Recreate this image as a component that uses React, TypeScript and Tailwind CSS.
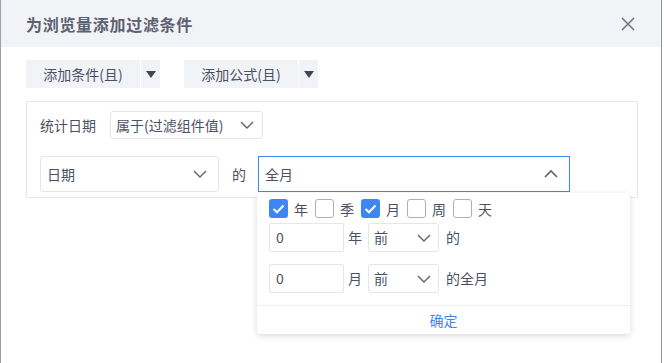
import React from "react";

const font = { fontFamily: '"Noto Sans CJK SC", "Noto Sans", sans-serif' };

function ChevronDown({ className = "" }: { className?: string }) {
  return (
    <svg width="16" height="10" viewBox="0 0 16 10" className={className} fill="none">
      <path d="M2 2 L8 8 L14 2" stroke="#5b6272" strokeWidth="1.4" />
    </svg>
  );
}

function ChevronUp() {
  return (
    <svg width="16" height="10" viewBox="0 0 16 10" fill="none">
      <path d="M2 8 L8 2 L14 8" stroke="#5b6272" strokeWidth="1.6" />
    </svg>
  );
}

function Check({ checked, label }: { checked: boolean; label: string }) {
  return (
    <div className="flex items-center">
      <div
        className={
          checked
            ? "w-[19px] h-[19px] rounded-[3px] bg-[#3e86f3] flex items-center justify-center"
            : "w-[19px] h-[19px] rounded-[3px] border border-[#a9afbb] bg-white"
        }
      >
        {checked && (
          <svg width="13" height="10" viewBox="0 0 13 10" fill="none">
            <path d="M1.5 5 L5 8.3 L11.5 1.5" stroke="white" strokeWidth="2" />
          </svg>
        )}
      </div>
      <span className="ml-[6px] text-[14px] text-[#4b5162] leading-none">{label}</span>
    </div>
  );
}

export default function App() {
  return (
    <div
      className="relative w-[664px] h-[363px] bg-white overflow-hidden border-l border-[#9aa1ad]"
      style={font}
    >
      <div className="absolute right-0 top-0 w-[2px] h-full bg-white" />
      <div className="absolute right-[2px] top-0 w-[1px] h-full bg-[#8e95a1]" />
      {/* header */}
      <div className="h-[47px] bg-[#f2f3f7] flex items-center justify-between pl-[25px] pr-[29px]">
        <span className="text-[16px] font-bold text-[#5b6171] tracking-[0.7px]">为浏览量添加过滤条件</span>
        <svg width="14" height="14" viewBox="0 0 14 14" fill="none">
          <path d="M1 1 L13 13 M13 1 L1 13" stroke="#6b7282" strokeWidth="1.5" />
        </svg>
      </div>

      <div className="pl-[25px] pt-[13px]">
        {/* buttons */}
        <div className="flex items-center">
          <div className="flex">
            <div className="w-[114px] h-[28px] bg-[#f1f3f7] flex items-center justify-center text-[14px] text-[#4b5162]">
              添加条件(且)
            </div>
            <div className="ml-[1px] w-[19px] h-[28px] bg-[#f1f3f7] flex items-center justify-center">
              <svg width="10" height="7" viewBox="0 0 10 7">
                <path d="M0 0 H10 L5 7 Z" fill="#3f4656" />
              </svg>
            </div>
          </div>
          <div className="flex ml-[24px]">
            <div className="w-[114px] h-[28px] bg-[#f1f3f7] flex items-center justify-center text-[14px] text-[#4b5162]">
              添加公式(且)
            </div>
            <div className="ml-[1px] w-[19px] h-[28px] bg-[#f1f3f7] flex items-center justify-center">
              <svg width="10" height="7" viewBox="0 0 10 7">
                <path d="M0 0 H10 L5 7 Z" fill="#3f4656" />
              </svg>
            </div>
          </div>
        </div>

        {/* panel */}
        <div className="mt-[13px] w-[612px] h-[97px] border border-[#e4e6eb] rounded-[2px] pl-[13px] pt-[9px]">
          <div className="flex items-center">
            <span className="text-[14px] text-[#4b5162] w-[70px]">统计日期</span>
            <div className="w-[153px] h-[28px] border border-[#e4e6eb] rounded-[3px] flex items-center justify-between pl-[5px] pr-[7px]">
              <span className="text-[14px] text-[#4b5162]">属于(过滤组件值)</span>
              <ChevronDown />
            </div>
          </div>
          <div className="flex items-center mt-[17px]">
            <div className="w-[179px] h-[36px] border border-[#e4e6eb] rounded-[3px] flex items-center justify-between pl-[6px] pr-[10px]">
              <span className="text-[14px] text-[#4b5162]">日期</span>
              <ChevronDown />
            </div>
            <span className="ml-[13px] text-[14px] text-[#4b5162]">的</span>
            <div className="ml-[12px] w-[312px] h-[36px] border border-[#3e86f3] flex items-center justify-between pl-[6px] pr-[10px]">
              <span className="text-[14px] text-[#4b5162]">全月</span>
              <ChevronUp />
            </div>
          </div>
        </div>
      </div>

      {/* dropdown */}
      <div className="absolute left-[256px] top-[193px] w-[373px] h-[141px] bg-white rounded-[3px] shadow-[0_2px_6px_rgba(0,0,0,0.15)] flex flex-col">
        <div className="pl-[12px] pt-[6px]">
          <div className="flex items-center gap-[7px] h-[19px]">
            <Check checked label="年" />
            <Check checked={false} label="季" />
            <Check checked label="月" />
            <Check checked={false} label="周" />
            <Check checked={false} label="天" />
          </div>
          <div className="flex items-center mt-[5px]">
            <div className="w-[75px] h-[29px] border border-[#e4e6eb] rounded-[2px] flex items-center pl-[6px] text-[14px] text-[#4b5162]">
              0
            </div>
            <span className="ml-[4px] text-[14px] text-[#4b5162]">年</span>
            <div className="ml-[6px] w-[71px] h-[29px] border border-[#e4e6eb] rounded-[3px] flex items-center justify-between pl-[5px] pr-[6px]">
              <span className="text-[14px] text-[#4b5162]">前</span>
              <ChevronDown />
            </div>
            <span className="ml-[7px] text-[14px] text-[#4b5162]">的</span>
          </div>
          <div className="flex items-center mt-[12px]">
            <div className="w-[75px] h-[29px] border border-[#e4e6eb] rounded-[2px] flex items-center pl-[6px] text-[14px] text-[#4b5162]">
              0
            </div>
            <span className="ml-[4px] text-[14px] text-[#4b5162]">月</span>
            <div className="ml-[6px] w-[71px] h-[29px] border border-[#e4e6eb] rounded-[3px] flex items-center justify-between pl-[5px] pr-[6px]">
              <span className="text-[14px] text-[#4b5162]">前</span>
              <ChevronDown />
            </div>
            <span className="ml-[7px] text-[14px] text-[#4b5162]">的全月</span>
          </div>
        </div>
        <div className="mt-auto h-[29px] border-t border-[#eceef1] flex items-center justify-center">
          <span className="text-[14px] text-[#3e86f3]">确定</span>
        </div>
      </div>
    </div>
  );
}
